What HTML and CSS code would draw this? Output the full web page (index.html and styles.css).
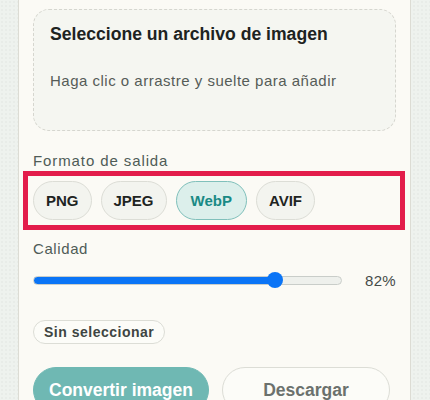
FILE: index.html
```html
<!DOCTYPE html>
<html lang="es">
<head>
<meta charset="utf-8">
<title>Convertir imagen</title>
<link rel="stylesheet" href="styles.css">
</head>
<body>
<div class="page">
  <section class="card">
    <div class="dropzone">
      <h2 class="drop-title">Seleccione un archivo de imagen</h2>
      <p class="drop-hint">Haga clic o arrastre y suelte para añadir</p>
    </div>

    <div class="label">Formato de salida</div>
    <div class="formats">
      <button class="pill">PNG</button>
      <button class="pill">JPEG</button>
      <button class="pill pill-active">WebP</button>
      <button class="pill">AVIF</button>
    </div>

    <div class="label label-quality">Calidad</div>
    <div class="slider-row">
      <input class="slider" type="range" min="10" max="100" value="82" style="--p: 80%">
      <span class="slider-value">82%</span>
    </div>

    <div class="status">Sin seleccionar</div>

    <div class="actions">
      <button class="btn btn-primary">Convertir imagen</button>
      <button class="btn btn-secondary">Descargar</button>
    </div>
  </section>
</div>
</body>
</html>
```
FILE: styles.css
```css
html, body {
  margin: 0;
  padding: 0;
}
body {
  background-color: #eef2ee;
  background-image: radial-gradient(rgba(0,0,0,0.025) 1px, transparent 1px);
  background-size: 4px 4px;
  font-family: "Liberation Sans", Arial, sans-serif;
  color: #1f2523;
  height: 400px;
  overflow: hidden;
}
.page {
  padding: 0 19px 0 18px;
}
.card {
  margin-top: -20px;
  padding: 28px 14px 20px 14px;
  background: #fbfaf5;
  border: 1px solid #dcdcd4;
  border-radius: 0 0 16px 16px;
}
.dropzone {
  height: 122px;
  box-sizing: border-box;
  border: 1px dashed #d6d6cf;
  border-radius: 16px;
  background: #f5f6f1;
  padding: 14px 16px;
}
.drop-title {
  margin: 0;
  font-size: 17.6px;
  font-weight: 700;
  line-height: 20px;
  color: #1d2321;
}
.drop-hint {
  margin: 0;
  margin-top: 28px;
  font-size: 15px;
  letter-spacing: 0.5px;
  line-height: 18px;
  color: #555c58;
}
.label {
  margin-top: 21px;
  font-size: 15px;
  letter-spacing: 0.9px;
  line-height: 18px;
  color: #4f5c57;
}
.formats {
  display: flex;
  gap: 9px;
  margin: 1px -9px 0 -10px;
  padding: 5px;
  border: 5px solid #e31d4b;
}
.pill {
  height: 39px;
  padding: 0 12px;
  border-radius: 20px;
  border: 1px solid #dcddd6;
  background: #f3f4ef;
  font-family: "Liberation Sans", Arial, sans-serif;
  font-size: 15px;
  font-weight: 700;
  color: #1e2422;
}
.pill-active {
  background: #dcefeb;
  border-color: #80c0bb;
  color: #198a85;
  padding: 0 14px;
}
.label-quality {
  margin-top: 10px;
  letter-spacing: 0.6px;
}
.slider-row {
  display: flex;
  align-items: center;
  justify-content: space-between;
  margin-top: 12px;
  height: 20px;
}
.slider {
  -webkit-appearance: none;
  appearance: none;
  margin: 0;
  width: 309px;
  height: 9px;
  border-radius: 5px;
  border: 1px solid #c9cdc9;
  box-sizing: border-box;
  background: linear-gradient(to right, #0a74f6 var(--p), #eef0ec var(--p));
}
.slider::-webkit-slider-thumb {
  -webkit-appearance: none;
  appearance: none;
  width: 16px;
  height: 16px;
  border-radius: 50%;
  background: #0a74f6;
  border: none;
}
.slider-value {
  font-size: 15px;
  letter-spacing: 0.3px;
  color: #454b48;
}
.status {
  display: inline-block;
  margin-top: 30px;
  height: 24px;
  box-sizing: border-box;
  line-height: 22px;
  padding: 0 10px;
  border: 1px solid #dcddd6;
  border-radius: 12px;
  background: #fcfcf8;
  font-size: 14px;
  letter-spacing: 0.5px;
  font-weight: 700;
  color: #3e4542;
}
.actions {
  display: flex;
  gap: 13px;
  margin-top: 23px;
}
.btn {
  flex-shrink: 0;
  white-space: nowrap;
  height: 46px;
  border-radius: 23px;
  font-family: "Liberation Sans", Arial, sans-serif;
  font-size: 17.5px;
  font-weight: 700;
}
.btn-primary {
  padding: 0 15px;
  background: #6fb8b3;
  border: 1px solid #6fb8b3;
  color: #ffffff;
}
.btn-secondary {
  width: 168px;
  background: #fcfcf8;
  border: 1px solid #dcddd6;
  color: #6b716d;
}
```
